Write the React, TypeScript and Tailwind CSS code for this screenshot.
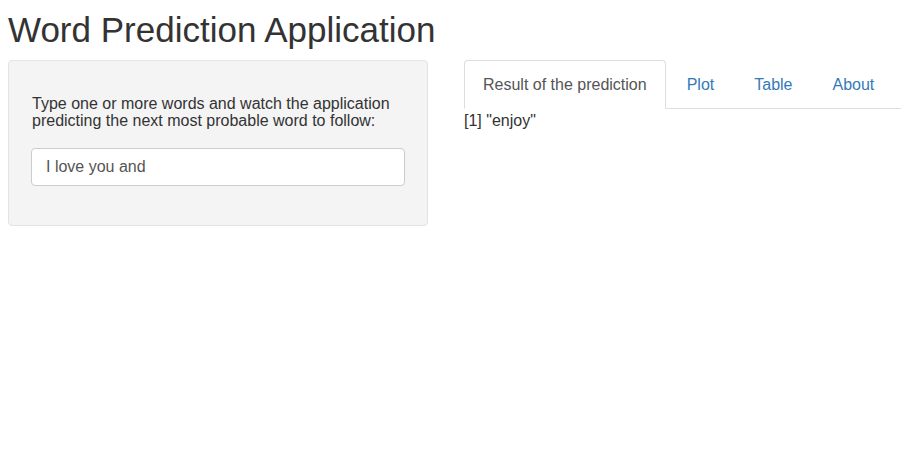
import React, { useState } from 'react';

const tabs = ['Result of the prediction', 'Plot', 'Table', 'About'];

export default function App() {
  const [active, setActive] = useState(0);
  const [text, setText] = useState('I love you and');

  return (
    <div className="min-h-[460px] bg-white text-[#333] font-['Liberation_Sans',Arial,sans-serif]">
      <div className="pl-[8px]">
        {/* Title */}
        <h1 className="pt-[10px] text-[35px] leading-[39px] font-normal">Word Prediction Application</h1>

        <div className="flex mt-[11px]">
          {/* Sidebar */}
          <div className="w-[420px] shrink-0">
            <div className="h-[166px] bg-[#f4f4f4] border border-[#e3e3e3] rounded px-[22px] pt-[34px] pb-[39px]">
              <label className="block text-[16px] leading-[17px] pl-[1px]">
                Type one or more words and watch the application predicting the next most probable word to follow:
              </label>
              <input
                value={text}
                onChange={(e) => setText(e.target.value)}
                className="mt-[19px] w-full h-[38px] bg-white border border-[#ccc] rounded pl-[14px] text-[16px] text-[#555] outline-none"
              />
            </div>
          </div>

          {/* Main panel */}
          <div className="ml-[36px] flex-1">
            <ul className="flex border-b border-[#ddd]">
              {tabs.map((t, i) => (
                <li key={t} className="mr-[2px] -mb-px">
                  <button
                    onClick={() => setActive(i)}
                    className={`h-[49px] px-[18px] text-[16px] rounded-t border ${
                      i === active
                        ? 'bg-white text-[#555] border-[#ddd] border-b-white'
                        : 'text-[#337ab7] border-transparent'
                    }`}
                  >
                    {t}
                  </button>
                </li>
              ))}
            </ul>
            <div className="mt-[3px] text-[16px] leading-[18px]">
              {active === 0 && <span>[1] "enjoy"</span>}
            </div>
          </div>
        </div>
      </div>
    </div>
  );
}
